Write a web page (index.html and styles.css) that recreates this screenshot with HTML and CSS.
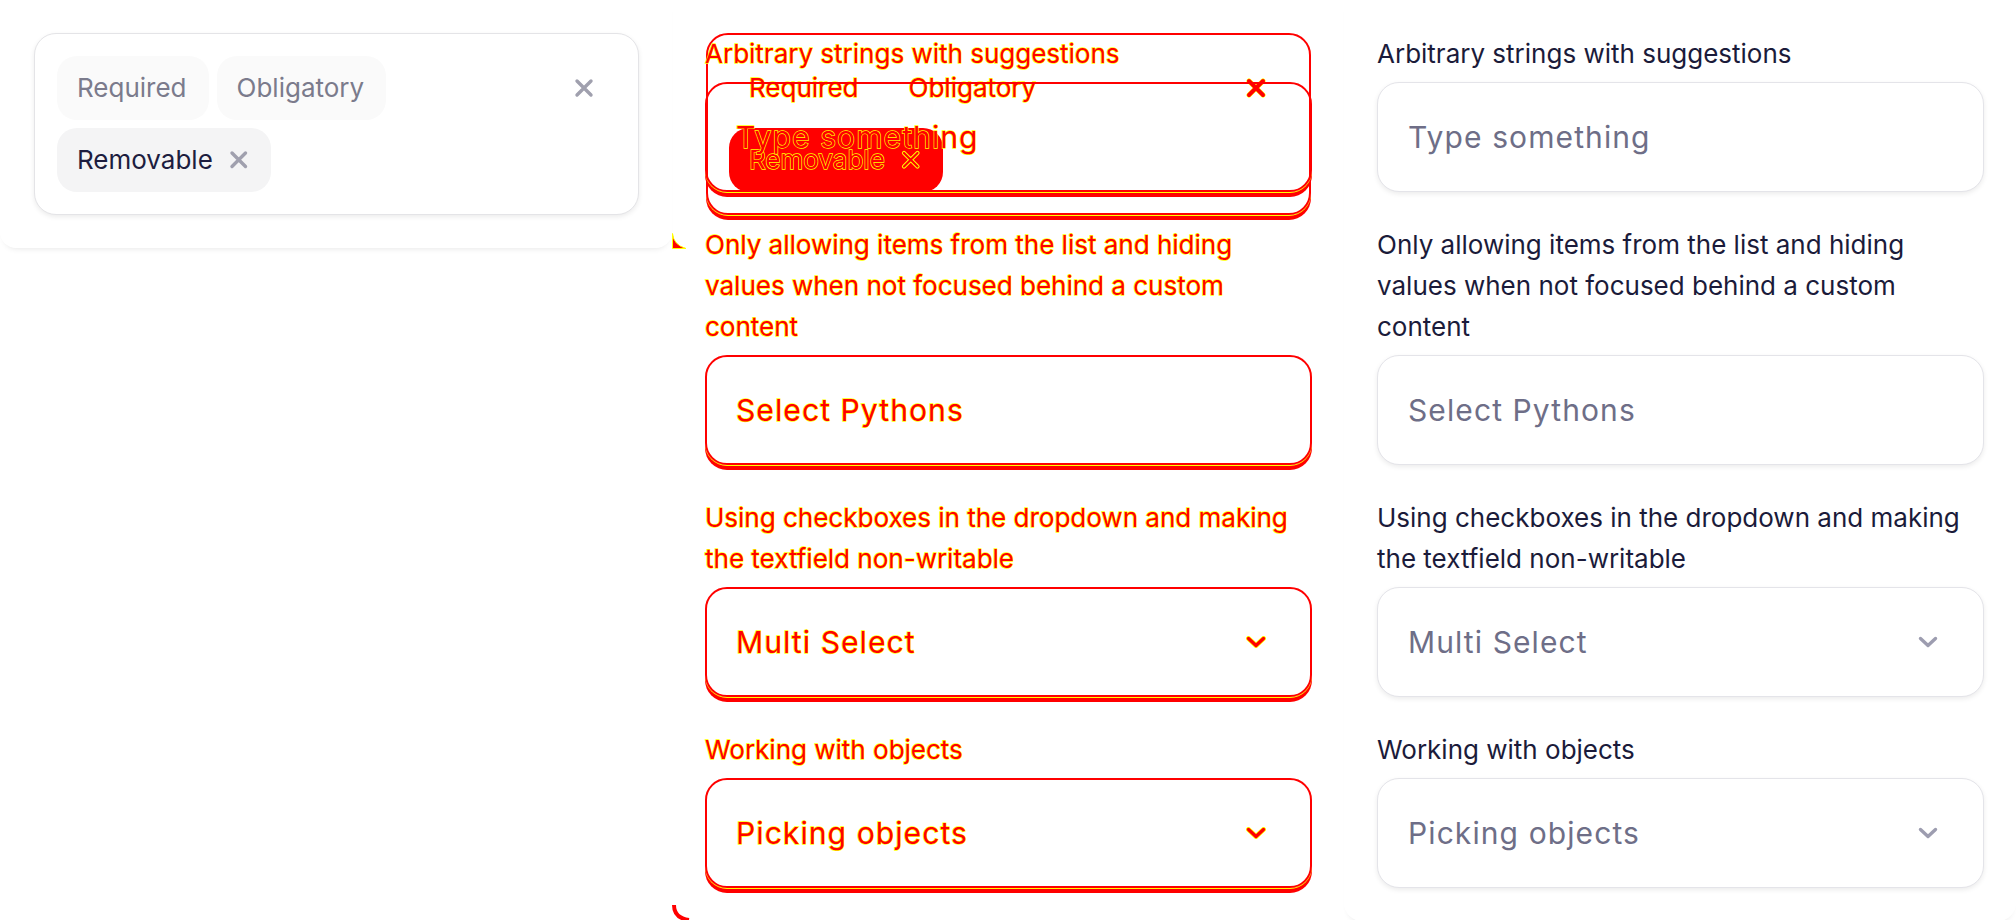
FILE: index.html
```html
<!DOCTYPE html>
<html lang="en">
<head>
<meta charset="utf-8">
<title>Select examples – visual diff</title>
<link rel="stylesheet" href="styles.css">
</head>
<body>
<div class="stage">

  <section class="panel panel-a">
    <div class="tagbox">
      <div class="tag-row">
        <span class="chip chip-fixed">Required</span>
        <span class="chip chip-fixed">Obligatory</span>
        <span class="spacer"></span>
        <svg class="clear-x" viewBox="0 0 20 20" width="20" height="20"><path d="M3 3L17 17M17 3L3 17"/></svg>
      </div>
      <div class="tag-row">
        <span class="chip chip-removable">Removable<svg class="chip-x" viewBox="0 0 20 20" width="21" height="20"><path d="M3.5 3L17 16.5M17 3L3.5 16.5"/></svg></span>
      </div>
    </div>
  </section>

  <section class="panel panel-diff">
    <div class="tagbox ghost">
      <div class="tag-row">
        <span class="chip chip-fixed d-text">Required</span>
        <span class="chip chip-fixed d-text">Obligatory</span>
        <span class="spacer"></span>
        <svg class="clear-x" viewBox="0 0 20 20" width="20" height="20"><path class="under" d="M3 3L17 17M17 3L3 17"/><path class="over" d="M3 3L17 17M17 3L3 17"/></svg>
      </div>
      <div class="tag-row">
        <span class="chip chip-removable d-text">Removable<svg class="chip-x" viewBox="0 0 20 20" width="21" height="20"><path class="under" d="M3.5 3L17 16.5M17 3L3.5 16.5"/><path class="over" d="M3.5 3L17 16.5M17 3L3.5 16.5"/></svg></span>
      </div>
    </div>

    <div class="form diff-form">
      <div class="field">
        <div class="label d-text">Arbitrary strings with suggestions</div>
        <div class="box d-box"><span class="placeholder d-text">Type something</span></div>
      </div>
      <div class="field">
        <div class="label d-text">Only allowing items from the list and hiding values when not focused behind a custom content</div>
        <div class="box d-box"><span class="placeholder d-text">Select Pythons</span></div>
      </div>
      <div class="field">
        <div class="label d-text">Using checkboxes in the dropdown and making the textfield non-writable</div>
        <div class="box d-box"><span class="placeholder d-text">Multi Select</span>
          <svg class="chev" viewBox="0 0 20 12" width="20" height="12"><path class="under" d="M2.5 2.5L10 9.5L17.5 2.5"/><path class="over" d="M2.5 2.5L10 9.5L17.5 2.5"/></svg>
        </div>
      </div>
      <div class="field">
        <div class="label d-text">Working with objects</div>
        <div class="box d-box"><span class="placeholder d-text">Picking objects</span>
          <svg class="chev" viewBox="0 0 20 12" width="20" height="12"><path class="under" d="M2.5 2.5L10 9.5L17.5 2.5"/><path class="over" d="M2.5 2.5L10 9.5L17.5 2.5"/></svg>
        </div>
      </div>
    </div>

    <svg class="corner corner-top" viewBox="0 0 16 16" width="16" height="16"><path d="M0.5 0.5 Q1.5 12 14 15.5 L0.5 15.5 Z"/></svg>
    <svg class="corner corner-bottom" viewBox="0 0 18 16" width="18" height="16"><path d="M2 0 Q2 13 17 15"/></svg>
  </section>

  <section class="panel panel-b">
    <div class="form">
      <div class="field">
        <div class="label">Arbitrary strings with suggestions</div>
        <div class="box"><span class="placeholder">Type something</span></div>
      </div>
      <div class="field">
        <div class="label">Only allowing items from the list and hiding values when not focused behind a custom content</div>
        <div class="box"><span class="placeholder">Select Pythons</span></div>
      </div>
      <div class="field">
        <div class="label">Using checkboxes in the dropdown and making the textfield non-writable</div>
        <div class="box"><span class="placeholder">Multi Select</span>
          <svg class="chev" viewBox="0 0 20 12" width="20" height="12"><path d="M2.5 2.5L10 9.5L17.5 2.5"/></svg>
        </div>
      </div>
      <div class="field">
        <div class="label">Working with objects</div>
        <div class="box"><span class="placeholder">Picking objects</span>
          <svg class="chev" viewBox="0 0 20 12" width="20" height="12"><path d="M2.5 2.5L10 9.5L17.5 2.5"/></svg>
        </div>
      </div>
    </div>
  </section>

</div>
</body>
</html>
```

FILE: styles.css
```css
* { box-sizing: border-box; }

html, body {
  margin: 0;
  padding: 0;
  background: #ffffff;
}

body {
  width: 2016px;
  height: 920px;
  overflow: hidden;
  font-family: "Inter", "Noto Sans", sans-serif;
  color: #1b1b3a;
}

.stage {
  display: grid;
  grid-template-columns: repeat(3, 672px);
  align-items: start;
}

.panel {
  background: #ffffff;
  position: relative;
}

.panel-a {
  padding: 33px 33px 33px 34px;
  border-radius: 0 0 16px 16px;
  box-shadow: 0 5px 6px -5px rgba(0, 0, 0, 0.12);
}

.panel-diff {
  padding: 33px 32px 33px 33px;
  height: 920px;
  background: transparent;
}

.panel-b {
  padding: 33px 32px 33px 33px;
  border-radius: 0 0 18px 18px;
  box-shadow: 0 5px 6px -5px rgba(0, 0, 0, 0.12);
}

/* ---------- tag box (chips) ---------- */
.tagbox {
  width: 605px;
  height: 182px;
  border: 1px solid #e4e4e7;
  border-radius: 22px;
  padding: 22px;
  background: #ffffff;
  box-shadow: 0 2px 5px rgba(0, 0, 0, 0.08);
  display: flex;
  flex-direction: column;
  gap: 8px;
}

.tag-row {
  display: flex;
  align-items: center;
  gap: 8px;
}

.spacer { flex: 1; }

.chip {
  height: 64px;
  display: inline-flex;
  align-items: center;
  padding: 0 22px 0 20px;
  border-radius: 20px;
  font-size: 26px;
  line-height: 1;
}

.chip-fixed {
  background: #fafafa;
  color: #7b7b8c;
}

.chip-removable {
  background: #f4f4f5;
  color: #1d1d3f;
  gap: 15px;
}

.clear-x {
  margin-right: 22px;
  fill: none;
  stroke: #a0a0ae;
  stroke-width: 3.4;
  stroke-linecap: round;
}

.chip-x {
  fill: none;
  stroke: #a0a0ae;
  stroke-width: 3.4;
  stroke-linecap: round;
}

/* ---------- form ---------- */
.form {
  display: flex;
  flex-direction: column;
  gap: 32px;
}

.field {
  display: flex;
  flex-direction: column;
  gap: 8px;
}

.label {
  font-size: 26px;
  line-height: 41px;
  color: #1b1b3a;
}

.box {
  height: 110px;
  border: 1px solid #e4e4e9;
  border-radius: 22px;
  background: #ffffff;
  box-shadow: 0 2px 5px rgba(0, 0, 0, 0.08);
  display: flex;
  align-items: center;
  justify-content: space-between;
  padding: 0 45px 0 30px;
}

.placeholder {
  font-size: 30px;
  letter-spacing: 1.1px;
  color: #6e6e87;
}

.chev {
  fill: none;
  stroke: #9d9db0;
  stroke-width: 3.4;
  stroke-linecap: round;
  stroke-linejoin: round;
}

/* ---------- diff rendering ---------- */
.diff-form {
  position: relative;
  z-index: 1;
}

.d-text {
  color: #ff0000;
  -webkit-text-stroke: 1.3px #ffff00;
  paint-order: stroke fill;
}

.d-box {
  background: transparent;
  border: 2px solid #ff0000;
  box-shadow: 0 1px 0 #ffff00, 0 5px 0 #ff0000;
  padding: 0 44px 0 29px;
}

.panel-diff .label,
.panel-diff .placeholder {
  color: #ff0000;
}

.panel-diff svg .under {
  stroke: #ffff00;
  stroke-width: 5;
}

.panel-diff svg .over {
  stroke: #ff0000;
  stroke-width: 3.4;
}

.ghost {
  position: absolute;
  top: 33px;
  left: 34px;
  background: transparent;
  border: 2px solid #ff0000;
  box-shadow: 0 1px 0 #ffff00, 0 5px 0 #ff0000;
  padding: 21px;
}

.ghost .chip-fixed {
  background: transparent;
}

.ghost .chip-removable {
  background: #ff0000;
}

.ghost .chip-removable .under {
  stroke: #ffff00;
  stroke-width: 4.2;
}

.ghost .chip-removable .over {
  stroke: #ff0000;
  stroke-width: 2.2;
}

.ghost .clear-x .over {
  stroke-width: 4;
}

.corner {
  position: absolute;
  left: 0;
}

.corner-top {
  top: 233px;
  fill: #ff0000;
  stroke: #ffff00;
  stroke-width: 1;
}

.corner-bottom {
  top: 905px;
  fill: none;
  stroke: #ff0000;
  stroke-width: 4;
}
```
